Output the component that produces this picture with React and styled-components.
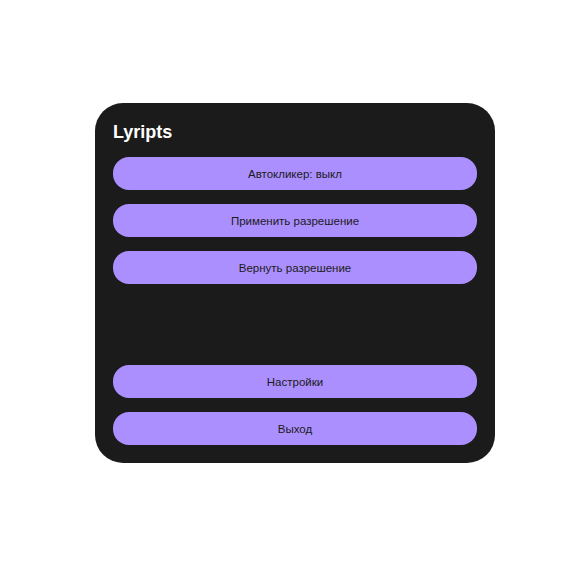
import React from 'react';
import styled, { createGlobalStyle } from 'styled-components';

const GlobalStyle = createGlobalStyle`
  html, body {
    margin: 0;
    padding: 0;
    background: #ffffff;
  }
`;

const Page = styled.div`
  padding: 103px 0 0 95px;
`;

const Panel = styled.div`
  box-sizing: border-box;
  width: 400px;
  height: 360px;
  padding: 18px;
  background: #1b1b1b;
  border-radius: 28px;
  display: flex;
  flex-direction: column;
  gap: 14px;
`;

const Title = styled.h1`
  margin: 0;
  font-family: 'Liberation Sans', Arial, sans-serif;
  font-size: 18px;
  line-height: 22px;
  font-weight: 700;
  color: #ffffff;
`;

const Spacer = styled.div`
  flex: 1;
`;

const Button = styled.button`
  height: 33px;
  border: none;
  border-radius: 16px;
  background: #ab8ffe;
  color: #1b1b1b;
  font-family: 'Liberation Sans', Arial, sans-serif;
  font-size: 11.5px;
  cursor: pointer;
`;

export default function App() {
  return (
    <>
      <GlobalStyle />
      <Page>
        <Panel>
          <Title>Lyripts</Title>
          <Button>Автокликер: выкл</Button>
          <Button>Применить разрешение</Button>
          <Button>Вернуть разрешение</Button>
          <Spacer />
          <Button>Настройки</Button>
          <Button>Выход</Button>
        </Panel>
      </Page>
    </>
  );
}
